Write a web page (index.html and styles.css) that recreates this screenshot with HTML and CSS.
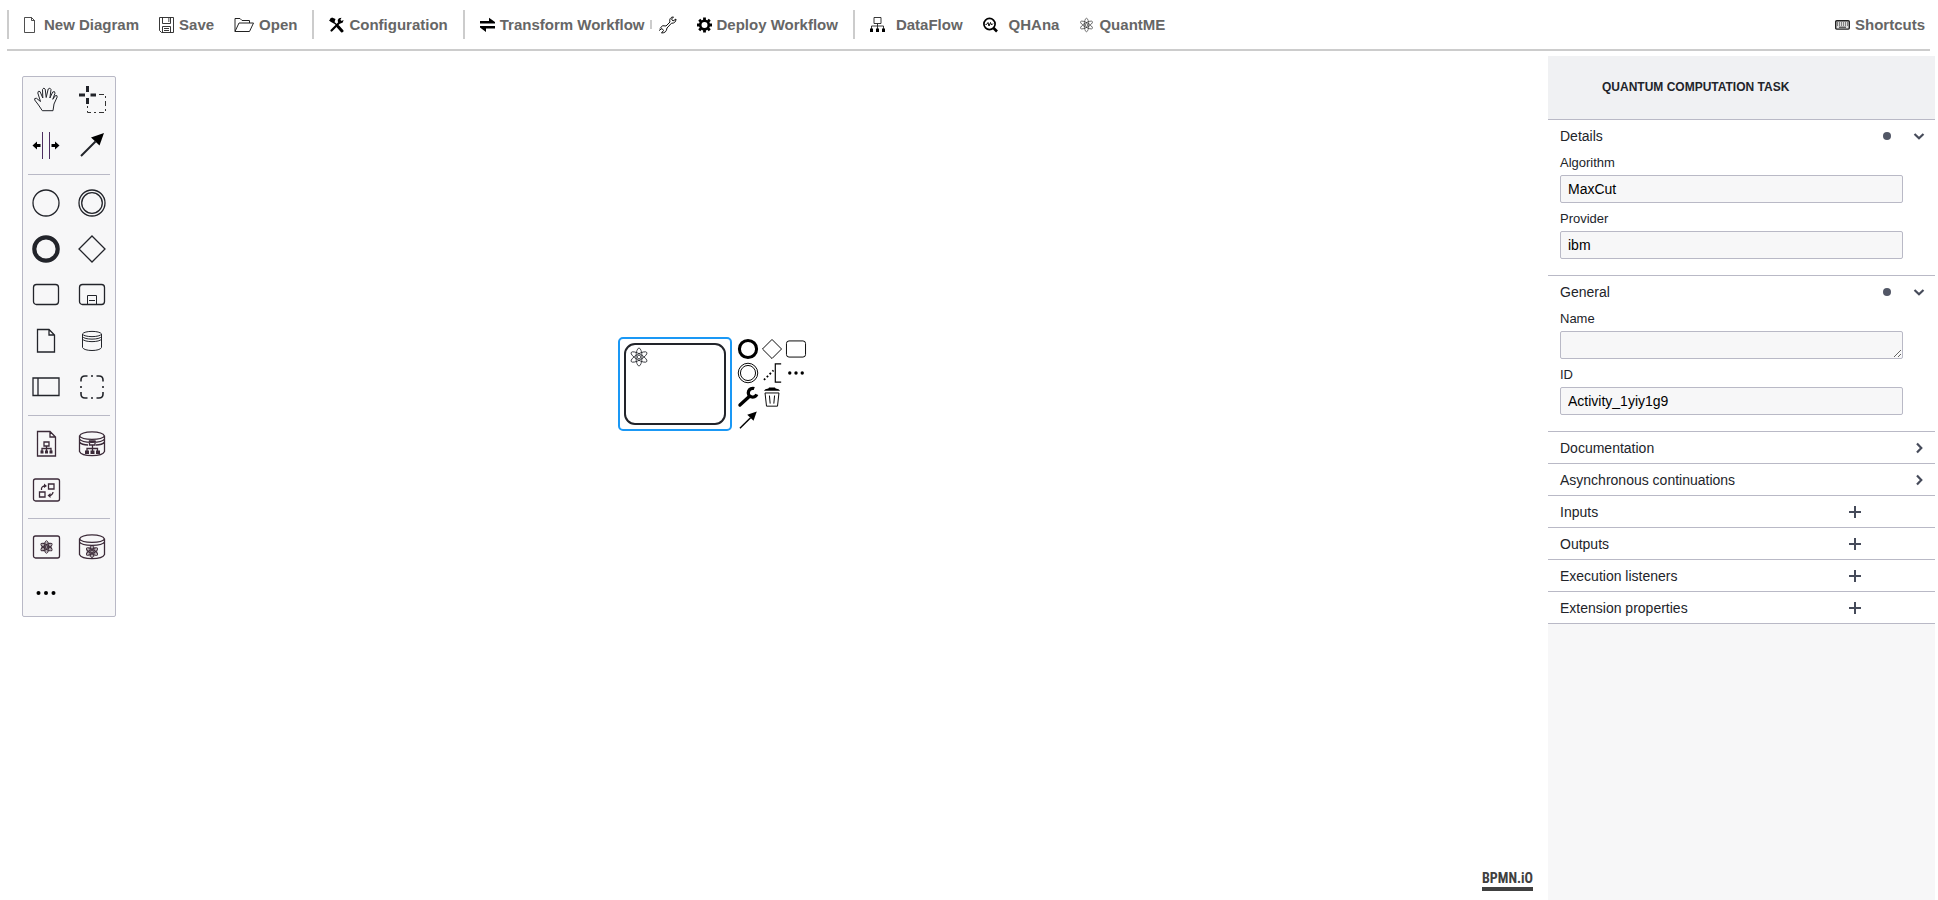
FILE: index.html
```html
<!DOCTYPE html>
<html lang="en">
<head>
<meta charset="utf-8">
<title>Quantum Workflow Modeler</title>
<link rel="stylesheet" href="styles.css">
</head>
<body>
<svg class="defs" aria-hidden="true">
  <symbol id="atom" viewBox="0 0 20 20">
    <g fill="none" stroke="currentColor">
      <ellipse cx="10" cy="10" rx="3" ry="9"/>
      <ellipse cx="10" cy="10" rx="3" ry="9" transform="rotate(60 10 10)"/>
      <ellipse cx="10" cy="10" rx="3" ry="9" transform="rotate(120 10 10)"/>
      <circle cx="10" cy="10" r="1.8"/>
    </g>
  </symbol>
  <symbol id="dots" viewBox="0 0 30 30">
    <circle cx="7.5" cy="15" r="2"/><circle cx="15" cy="15" r="2"/><circle cx="22.5" cy="15" r="2"/>
  </symbol>
  <symbol id="arrow" viewBox="0 0 30 30">
    <path d="M4 25 18.500 10.500" fill="none" stroke="currentColor" stroke-width="2"/><path d="M27 2 22.500 14.500 14 6.500z"/>
  </symbol>
  <symbol id="plus" viewBox="0 0 12 12"><path d="M6 0V12M0 6H12" stroke="currentColor" stroke-width="2"/></symbol>
  <symbol id="chevron" viewBox="0 0 12 12"><path d="M1.500 4 6 8.300 10.500 4" fill="none" stroke="currentColor" stroke-width="2.200"/></symbol>
</svg>

<header class="toolbar">
  <div class="group">
    <button class="tool"><svg width="15" height="16" viewBox="0 0 15 16"><path d="M.5.5H7.500L10.500 3.500V15.500H.5zM7.500.5V3.500H10.500" fill="none" stroke="#222" stroke-width=".8"/></svg>New Diagram</button>
    <button class="tool"><svg width="15" height="16" viewBox="0 0 15 16"><g fill="none" stroke="#222" stroke-width=".9"><path d="M.5.5H14.500V15.500H2.500L.5 13.500z"/><path d="M3.500.5V6.500H11.500V.5M3.500 15.500V9.500H11.500V15.500M5 11.500H10M5 13.500H10"/></g><path d="M9 1h1.500v4H9z" fill="#888"/></svg>Save</button>
    <button class="tool"><svg width="20" height="16" viewBox="0 0 20 16"><path d="M1 14.500V1.500H6L8 3.500H15.500V6M1 14.500H15.500L19.500 6H5z" fill="none" stroke="#222" stroke-linejoin="round"/></svg>Open</button>
  </div>
  <div class="group">
    <button class="tool"><svg width="15" height="16" viewBox="0 0 15 16"><path d="M2.500 13.500 11.500 4.500" stroke="#000" stroke-width="2.200" stroke-linecap="round"/><path d="M10 1.200 12.500.8 11.300 3 12.300 4 14.600 3 13.800 5.500 11.500 6.500 9 5.500 8.700 3z"/><path d="M1.500 1.500 5 5" stroke="#000" stroke-width="1.800"/><path d="M0 3.500 3 .5 6.500 2 5 6.500 2 5z"/><path d="M5 5.500 9 9" stroke="#000" stroke-width="1.500"/><path d="M9 9.500 13 14" stroke="#000" stroke-width="3" stroke-linecap="round"/></svg>Configuration</button>
  </div>
  <div class="group">
    <div class="pair">
      <button class="tool"><svg width="15" height="16" viewBox="0 0 15 16"><path d="M0 4H9V.8L15 5V6.600H0zM15 9H0V10.600L6 15V11.600H15z"/></svg>Transform Workflow</button>
      <span class="tick"></span>
      <button class="tool" aria-label="Transformation settings"><svg width="20" height="18" viewBox="0 0 20 18"><path d="M3 12.500 5.500 9.700 9 10 13 6C12 3 14 .8 16.500 1L14.500 3 16 5 19 3C19 6 17 7.500 14.500 7.200L10 12C9.500 15.500 8 17 4.500 17L6.500 14.500 5 12.500 2 14.500" fill="none" stroke="#111"/></svg></button>
    </div>
    <button class="tool"><svg width="15" height="16" viewBox="0 0 15 16"><circle cx="7.500" cy="8" r="4.300" fill="none" stroke="#000" stroke-width="2.600"/><path d="M7.500.5V3M7.500 13V15.500M0 8H3M12 8H15M2.200 2.700 4 4.500M11 11.500 12.800 13.300M12.800 2.700 11 4.500M4 11.500 2.200 13.300" stroke="#000" stroke-width="2.800"/></svg>Deploy Workflow</button>
  </div>
  <div class="group">
    <button class="tool"><svg width="21" height="16" viewBox="0 0 21 16"><path d="M4 .5H11V6.500H4zM7.500 6.500V12M1.500 12V9H13.500V12" fill="none" stroke="#222" stroke-width=".9"/><path d="M0 11.500H3V15H0zM6 11.500H9V15H6zM12 11.500H15V15H12z"/></svg>DataFlow</button>
    <button class="tool"><svg width="21" height="16" viewBox="0 0 21 16"><circle cx="6.500" cy="7" r="5.600" fill="none" stroke="#000" stroke-width="1.700"/><path d="M10.500 11 14 14.500" stroke="#000" stroke-width="2.600"/><path d="M2.500 7.500H3.500L5 5.500 6 9 7.500 5.500 8.500 8 10 6.500" fill="none" stroke="#000"/></svg>QHAna</button>
    <button class="tool"><svg width="15" height="16" class="thin"><use href="#atom"/></svg>QuantME</button>
  </div>
  <button class="tool shortcuts"><svg width="15" height="10" viewBox="0 0 15 10"><rect x=".7" y=".7" width="13.600" height="8.400" rx="1" fill="#ddd" stroke="#222" stroke-width="1.400"/><path d="M2 3H13M2 5H13" stroke="#222" stroke-dasharray="1 1"/><path d="M4 7.200H11" stroke="#222"/></svg>Shortcuts</button>
</header>

<main class="workspace">
  <section class="canvas" aria-label="Diagram">
    <nav class="palette" aria-label="Palette">
      <div class="cells">
        <button aria-label="Hand tool"><svg viewBox="0 0 30 30"><path d="M11.300 25.700 7.500 20 3.700 15Q3 12.800 5.500 13.300L9.500 16.500 6.800 8Q6.900 5.400 9 6.500L11.800 13 11.500 4.500Q12.800 1.800 14.200 4.200L15.200 12.500 17.200 4Q19 2 20 4.500L18.900 13 21.700 7Q24 5.600 24 8.200L21.800 14.300 24.300 10.700Q26.400 9.700 26.200 12L23 19 22 25.700z" class="line"/></svg></button>
        <button aria-label="Lasso tool"><svg viewBox="0 0 30 30"><path d="M10.500 1V7M10.500 13V19M2 10H8M13.500 10H19" class="line w3"/><path d="M22 9.500H28.500V27.500H10.500V20" fill="none" stroke="#333" stroke-dasharray="5 3 2 3"/></svg></button>
        <button aria-label="Space tool"><svg viewBox="0 0 30 30"><path d="M11.500 1V28M18.500 1V28" stroke="#4d2d60"/><path d="M1.500 14.500 6 10.500V13H9.500V16H6V18.500zM28.500 14.500 24 10.500V13H20.500V16H24V18.500z"/></svg></button>
        <button aria-label="Global connect tool"><svg><use href="#arrow"/></svg></button>
      </div>
      <hr>
      <div class="cells">
        <button aria-label="Start event"><svg viewBox="0 0 30 30"><circle cx="15" cy="15" r="13" class="line w13"/></svg></button>
        <button aria-label="Intermediate event"><svg viewBox="0 0 30 30"><circle cx="15" cy="15" r="13" class="line w13"/><circle cx="15" cy="15" r="10.300" class="line w13"/></svg></button>
        <button aria-label="End event"><svg viewBox="0 0 30 30"><circle cx="15" cy="15" r="11.700" class="line w4"/></svg></button>
        <button aria-label="Gateway"><svg viewBox="0 0 30 30"><path d="M15 2 28 15 15 28 2 15z" class="line w13"/></svg></button>
        <button aria-label="Task"><svg viewBox="0 0 30 30"><rect x="2.500" y="4.500" width="25" height="20" rx="3" class="line w13"/></svg></button>
        <button aria-label="Sub process"><svg viewBox="0 0 30 30"><rect x="2.500" y="4.500" width="25" height="20" rx="3" class="line w13"/><path d="M10.500 24.500V15.500H19.500V24.500M12 20.500H18" class="line"/></svg></button>
        <button aria-label="Data object"><svg viewBox="0 0 30 30"><path d="M6.500 3.500H18L23.500 9V26H6.500zM18 3.500V9H23.500" class="line w13"/></svg></button>
        <button aria-label="Data store"><svg viewBox="0 0 30 30"><path d="M5.500 8V21.500C7 25.500 23 25.500 24.500 21.500V8C23 4.500 7 4.500 5.500 8C7 11.500 23 11.500 24.500 8M5.500 10.500C7 14 23 14 24.500 10.500M5.500 13C7 16.500 23 16.500 24.500 13" class="line"/></svg></button>
        <button aria-label="Pool"><svg viewBox="0 0 30 30"><path d="M2 6H28V23.500H2zM7 6V23.500" class="line w13"/></svg></button>
        <button aria-label="Group"><svg viewBox="0 0 30 30"><path d="M4 9.500V8Q4 4 8 4H10.500M19.500 4H22Q26 4 26 8V9.500M26 20V22Q26 26 22 26H19.500M10.500 26H8Q4 26 4 22V20M14 4H16M14 26H16M4 14V16M26 14V16" class="line w2"/></svg></button>
      </div>
      <hr>
      <div class="cells plum">
        <button aria-label="Data map object"><svg viewBox="0 0 30 30"><path d="M6.500 2.500H19L24.500 8V27H6.500zM19 2.500V8H24.500M13 13H18V17H13zM15.500 17V22M11 22V19.500H20V22" class="line w13"/><path d="M9.500 21.500H12.500V24.500H9.500zM14 21.500H17V24.500H14zM18.500 21.500H21.500V24.500H18.500z"/></svg></button>
        <button aria-label="Data store map"><svg viewBox="0 0 30 30"><path d="M2.500 7V22.500C5 28 25 28 27.500 22.500V7C25 1.500 5 1.500 2.500 7C5 11.500 25 11.500 27.500 7M2.500 10C5 14.500 25 14.500 27.500 10M2.500 13C4 15 8 16 11 16M19 16C22 16 26 15 27.500 13M12.500 12H18V16H12.500zM15.500 16V22M10 22V19.500H20.500V22" class="line w13"/><path d="M8 21.500H12V25H8zM13.500 21.500H17.500V25H13.500zM19 21.500H23V25H19z"/></svg></button>
        <button aria-label="Transformation task"><svg viewBox="0 0 30 30"><rect x="2.500" y="4" width="26" height="22" rx="2" class="line w13"/><path d="M17.500 9H23V14H17.500zM8.500 17H14V22H8.500zM10.500 15C10 12 12 11 14 11M22 17C22 19 20 20.500 18.500 20.500" class="line w13"/><path d="M13 8.500 16 11 13 13zM19.500 18 16.500 20.500 19.500 23z"/></svg></button>
      </div>
      <hr>
      <div class="cells plum">
        <button aria-label="Quantum computation task"><svg viewBox="0 0 30 30"><rect x="2.500" y="4" width="26" height="22" rx="2" class="line w13"/><circle cx="15.500" cy="15" r="5.500" fill="#b5afb3"/><use href="#atom" x="8.500" y="8" width="14" height="14" class="bold"/></svg></button>
        <button aria-label="Quantum data store"><svg viewBox="0 0 30 30"><path d="M2.500 7V22.500C5 28 25 28 27.500 22.500V7C25 1.500 5 1.500 2.500 7C5 11.500 25 11.500 27.500 7M2.500 10C5 14.500 25 14.500 27.500 10" class="line w13"/><circle cx="15" cy="19.500" r="5.500" fill="#b5afb3"/><use href="#atom" x="8" y="12.500" width="14" height="14" class="bold"/></svg></button>
        <button class="more" aria-label="More elements"><svg><use href="#dots"/></svg></button>
      </div>
    </nav>

    <div class="selection"><div class="task"><svg width="20" height="20" class="thin"><use href="#atom"/></svg></div></div>

    <div class="context-pad">
      <button aria-label="Append end event"><svg viewBox="0 0 30 30"><circle cx="15" cy="15" r="11.700" class="line w4"/></svg></button>
      <button aria-label="Append gateway"><svg viewBox="0 0 30 30"><path d="M15 2 28 15 15 28 2 15z" class="line w13"/></svg></button>
      <button aria-label="Append task"><svg viewBox="0 0 30 30"><rect x="2" y="4" width="26" height="22" rx="3.500" class="line w13"/></svg></button>
      <button aria-label="Append intermediate event"><svg viewBox="0 0 30 30"><circle cx="15" cy="15" r="13.300" class="line w13"/><circle cx="15" cy="15" r="10.300" class="line w13"/></svg></button>
      <button aria-label="Add text annotation"><svg viewBox="0 0 30 30"><path d="M27.500 2.500H19.500V27.500H27.500" class="line w2"/><path d="M4 24.500 17 11.500" class="line w25" stroke-dasharray="2.500 3"/></svg></button>
      <button aria-label="Append other"><svg viewBox="0 0 30 30"><circle cx="6.500" cy="15" r="2.300"/><circle cx="15" cy="15" r="2.300"/><circle cx="23.500" cy="15" r="2.300"/></svg></button>
      <button aria-label="Change type"><svg viewBox="0 0 30 30"><path d="M4 26 16 15" stroke="#000" stroke-width="4.500" stroke-linecap="round"/><path d="M23.500 3.500A6 6 0 1 0 27 11.500" fill="none" stroke="#000" stroke-width="4.500"/></svg></button>
      <button aria-label="Remove"><svg viewBox="0 0 30 30"><path d="M5.500 9.500H24.500L22.500 27.500H7.500zM11.500 13 12.500 24M18.500 13 17.500 24" class="line w13"/><path d="M4 6.500Q5 4 10 3.500L11 2H19L20 3.500Q25 4 26 6.500z"/></svg></button>
      <span></span>
      <button aria-label="Connect"><svg><use href="#arrow"/></svg></button>
    </div>

    <a class="brand" href="#">BPMN.iO</a>
  </section>

  <aside class="panel">
    <h1 class="panel-head">QUANTUM COMPUTATION TASK</h1>
    <section class="entry open">
      <button class="row">Details<i class="dot"></i><svg class="chev"><use href="#chevron"/></svg></button>
      <div class="fields">
        <div class="field"><label for="algorithm">Algorithm</label><input id="algorithm" type="text" value="MaxCut"></div>
        <div class="field"><label for="provider">Provider</label><input id="provider" type="text" value="ibm"></div>
      </div>
    </section>
    <section class="entry open">
      <button class="row">General<i class="dot"></i><svg class="chev"><use href="#chevron"/></svg></button>
      <div class="fields">
        <div class="field"><label for="name">Name</label><textarea id="name" rows="1"></textarea></div>
        <div class="field"><label for="ident">ID</label><input id="ident" type="text" value="Activity_1yiy1g9"></div>
      </div>
    </section>
    <section class="entry"><button class="row">Documentation<svg class="chev closed"><use href="#chevron"/></svg></button></section>
    <section class="entry"><button class="row">Asynchronous continuations<svg class="chev closed"><use href="#chevron"/></svg></button></section>
    <section class="entry"><button class="row list">Inputs<svg class="add"><use href="#plus"/></svg></button></section>
    <section class="entry"><button class="row list">Outputs<svg class="add"><use href="#plus"/></svg></button></section>
    <section class="entry"><button class="row list">Execution listeners<svg class="add"><use href="#plus"/></svg></button></section>
    <section class="entry"><button class="row list">Extension properties<svg class="add"><use href="#plus"/></svg></button></section>
  </aside>
</main>
</body>
</html>
```

FILE: styles.css
```css
* { box-sizing: border-box; }

body {
  margin: 0;
  height: 100vh;
  display: flex;
  flex-direction: column;
  background: #fff;
  color: #22242a;
  font-family: "Liberation Sans", Arial, sans-serif;
}

button {
  margin: 0;
  padding: 0;
  border: 0;
  background: none;
  color: inherit;
  font: inherit;
  cursor: pointer;
}

svg { display: block; flex: none; }
.defs { position: absolute; width: 0; height: 0; }

.toolbar {
  display: flex;
  align-items: center;
  margin: 0 8px 5px 7px;
  padding: 10px 0;
  border-bottom: 2px solid #ccc;
}

.group {
  display: flex;
  align-items: center;
  gap: 20px;
  height: 29px;
  padding: 0 15px;
  border-left: 2px solid #ccc;
}

.tool {
  display: flex;
  align-items: center;
  gap: 5px;
  color: #666;
  font-size: 15px;
  font-weight: bold;
  line-height: 20px;
  white-space: nowrap;
}
.tool svg { fill: #000; color: #222; }
.thin { stroke-width: 0.8; }

.pair { display: flex; align-items: center; gap: 5px; }
.tick { width: 2px; height: 9px; background: #ccc; }
.shortcuts { margin-left: auto; margin-right: 5px; }

.workspace { flex: 1; display: flex; min-height: 0; }
.canvas { position: relative; flex: 1; }

.palette {
  position: absolute;
  left: 22px;
  top: 20px;
  width: 94px;
  border: 1px solid #b9b9c6;
  border-radius: 2px;
  background: #f7f7f8;
}
.palette hr {
  margin: 5px;
  border: 0;
  border-top: 1px solid #b9b9c6;
}
.cells { display: grid; grid-template-columns: 1fr 1fr; }
.cells button { display: grid; place-items: center; height: 46px; }
.cells svg { width: 30px; height: 30px; }
.plum { color: #3b2a38; fill: #3b2a38; }
.plum .more { fill: #000; }
.bold { stroke-width: 1.3; }

.line { fill: none; stroke: currentColor; stroke-width: 1; }
.w13 { stroke-width: 1.3; }
.w2 { stroke-width: 1.6; }
.w25 { stroke-width: 2.5; }
.w3 { stroke-width: 3; }
.w4 { stroke-width: 4.2; }

.selection {
  position: absolute;
  left: 618px;
  top: 281px;
  padding: 4px;
  border: 2px solid #1a98f5;
  border-radius: 5px;
}
.task {
  width: 102px;
  height: 82px;
  padding: 2px 3px;
  border: 2px solid #22242a;
  border-radius: 11px;
}

.context-pad {
  position: absolute;
  left: 736px;
  top: 281px;
  display: grid;
  grid-template-columns: repeat(3, 24px);
  grid-auto-rows: 24px;
  color: #000;
}
.context-pad button { display: grid; place-items: center; }
.context-pad svg { width: 22px; height: 22px; }

.brand {
  position: absolute;
  right: 15px;
  bottom: 9px;
  border-bottom: 4px solid #404040;
  color: #404040;
  font-family: "Roboto Condensed", "Open Sans Condensed", Roboto, sans-serif;
  font-size: 14px;
  font-weight: bold;
  line-height: 18px;
  text-decoration: none;
}

.panel {
  width: 387px;
  margin-right: 3px;
  background: #f7f7f8;
}
.panel-head {
  margin: 0;
  padding: 0 54px;
  border-bottom: 1px solid #b9b9c6;
  background: #f0f1f3;
  font-size: 12px;
  line-height: 63px;
}
.entry { border-bottom: 1px solid #b9b9c6; background: #fff; }
.open { padding-bottom: 16px; }
.row {
  display: flex;
  align-items: center;
  width: 100%;
  height: 31px;
  padding: 0 10px 0 12px;
  font-size: 14px;
  text-align: left;
}
.row.list { padding-right: 74px; }
.dot {
  width: 8px;
  height: 8px;
  margin-left: auto;
  border-radius: 50%;
  background: #525766;
}
.dot + .chev { margin-left: 22px; }
.chev { width: 12px; height: 12px; margin-left: auto; color: #464b5a; }
.closed { transform: rotate(-90deg); }
.add { width: 12px; height: 12px; margin-left: auto; color: #464b5a; }

.fields { display: flex; flex-direction: column; gap: 4px; padding: 0 32px 0 12px; }
.field { display: flex; flex-direction: column; }
.field label {
  font-size: 13px;
  line-height: 24px;
}
.field input, .field textarea {
  width: 100%;
  height: 28px;
  padding: 4px 7px;
  border: 1px solid #b9b9c6;
  border-radius: 2px;
  background: #f7f7f8;
  color: #000;
  font-family: inherit;
  font-size: 14px;
}
```
